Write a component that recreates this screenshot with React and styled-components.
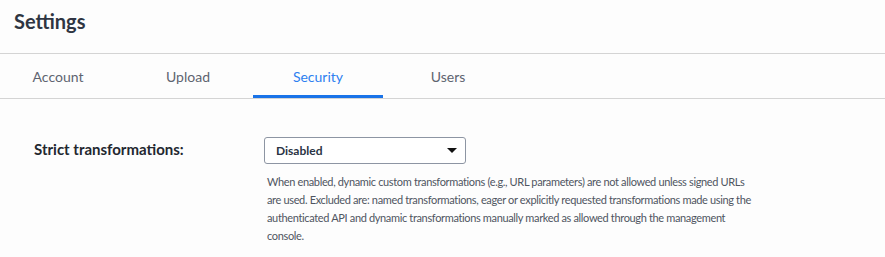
import React from "react";
import styled, { createGlobalStyle } from "styled-components";

const Global = createGlobalStyle`
  html, body { margin: 0; padding: 0; background: #fdfdfd; }
  body { font-family: "Lato", "Noto Sans", sans-serif; }
`;

const Page = styled.div`
  width: 885px;
  height: 257px;
  background: #fdfdfd;
  overflow: hidden;
`;

const Header = styled.header`
  height: 53px;
  border-bottom: 1px solid #d4d4d4;
  padding: 0 14px;
  display: flex;
  align-items: flex-start;
`;

const Title = styled.h1`
  margin: 9px 0 0;
  font-size: 20px;
  font-weight: 700;
  color: #2f3542;
  line-height: 24px;
`;

const TabBar = styled.nav`
  display: flex;
  height: 44px;
  border-bottom: 1px solid #d4d4d4;
`;

const TabList = styled.div`
  display: flex;
  margin-left: -7px;
`;

const Tab = styled.div`
  width: 130px;
  display: flex;
  align-items: center;
  justify-content: center;
  font-size: 14px;
  color: ${(p) => (p.$active ? "#2d7ff0" : "#5e6470")};
  border-bottom: 3px solid ${(p) => (p.$active ? "#1a73e8" : "transparent")};
  padding-top: 3px;
  box-sizing: border-box;
`;

const Content = styled.section`
  padding: 38px 0 0 34px;
`;

const Row = styled.div`
  display: flex;
  align-items: flex-start;
`;

const Label = styled.div`
  width: 230px;
  font-size: 15px;
  font-weight: 700;
  color: #23272f;
  line-height: 24px;
`;

const Field = styled.div`
  display: flex;
  flex-direction: column;
`;

const Select = styled.div`
  width: 202px;
  height: 27px;
  box-sizing: border-box;
  border: 1px solid #8d95a3;
  border-radius: 3px;
  display: flex;
  align-items: center;
  justify-content: space-between;
  padding: 0 8px 0 11px;
  font-size: 12px;
  font-weight: 700;
  color: #2a3444;
  background: #fff;
`;

const Caret = styled.span`
  width: 0;
  height: 0;
  border-left: 5px solid transparent;
  border-right: 5px solid transparent;
  border-top: 5px solid #111;
`;

const Help = styled.p`
  margin: 9px 0 0 3px;
  width: 490px;
  font-size: 11px;
  letter-spacing: -0.35px;
  line-height: 18px;
  color: #4f5561;
`;

export default function App() {
  return (
    <Page>
      <Global />
      <Header>
        <Title>Settings</Title>
      </Header>
      <TabBar>
        <TabList>
          <Tab>Account</Tab>
          <Tab>Upload</Tab>
          <Tab $active>Security</Tab>
          <Tab>Users</Tab>
        </TabList>
      </TabBar>
      <Content>
        <Row>
          <Label>Strict transformations:</Label>
          <Field>
            <Select>
              <span>Disabled</span>
              <Caret />
            </Select>
            <Help>
              When enabled, dynamic custom transformations (e.g., URL parameters) are not allowed unless signed URLs are used. Excluded are: named transformations, eager or explicitly requested transformations made using the authenticated API and dynamic transformations manually marked as allowed through the management console.
            </Help>
          </Field>
        </Row>
      </Content>
    </Page>
  );
}
